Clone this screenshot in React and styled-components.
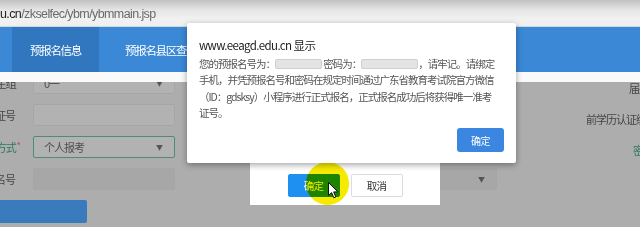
import React from 'react';
import styled, { createGlobalStyle } from 'styled-components';

const GlobalStyle = createGlobalStyle`
  html, body { margin: 0; padding: 0; background: #adadad; }
  body { font-family: "Noto Sans", "Noto Sans CJK SC", sans-serif; }
`;

const CJK = `"Noto Sans CJK SC", "Noto Sans", sans-serif`;

const Screen = styled.div`
  position: relative;
  width: 640px;
  height: 227px;
  overflow: hidden;
  display: flex;
  flex-direction: column;
  background: #adadad;
`;

const AddressBar = styled.div`
  height: 27px;
  flex: none;
  display: flex;
  align-items: center;
  background: linear-gradient(#c2c2c2 0%, #e6e6e6 40%, #f1f1f1 70%, #efefef 100%);
  border-bottom: 1px solid #d6d6d6;
  box-sizing: border-box;
  font-family: "Liberation Sans", Arial, sans-serif;
  font-size: 12.5px;
  letter-spacing: -0.6px;
  color: #6a6a6a;
  padding-top: 1px;
`;

const Host = styled.span`
  color: #222;
`;

const NavBar = styled.nav`
  height: 45px;
  flex: none;
  display: flex;
  background: #3b88d6;
  padding-left: 12px;
`;

const NavItem = styled.div`
  display: flex;
  align-items: center;
  justify-content: ${p => (p.$active ? 'center' : 'flex-start')};
  width: ${p => p.$width}px;
  padding-left: ${p => p.$pad || 0}px;
  background: ${p => (p.$active ? '#3077c0' : 'transparent')};
  color: #fff;
  font-family: ${CJK};
  font-size: 11.5px;
  letter-spacing: -1.3px;
  white-space: nowrap;
`;

const WhiteBand = styled.div`
  height: 10px;
  flex: none;
  background: #fafafa;
`;

const Content = styled.div`
  flex: 1;
  display: flex;
  overflow: hidden;
  background: #adadad;
`;

const FormCol = styled.div`
  width: 175px;
  flex: none;
  display: flex;
  flex-direction: column;
  gap: 10px;
  margin-top: -10px;
`;

const FormRow = styled.div`
  display: flex;
  align-items: center;
  height: 22px;
`;

const Label = styled.div`
  width: 20px;
  box-sizing: border-box;
  padding-right: ${p => (p.$required ? 0 : 5)}px;
  margin-right: 13px;
  display: flex;
  justify-content: flex-end;
  overflow: hidden;
  white-space: nowrap;
  font-family: ${CJK};
  font-size: 11px;
  letter-spacing: -1px;
  color: ${p => (p.$green ? '#2f7a5c' : '#454545')};
`;

const Star = styled.span`
  color: #b84848;
  font-size: 9px;
  margin-left: 1px;
  align-self: flex-start;
`;

const Input = styled.div`
  flex: 1;
  height: 100%;
  box-sizing: border-box;
  display: flex;
  align-items: center;
  justify-content: space-between;
  padding: 0 12px 0 10px;
  border-radius: 2px;
  background: ${p => (p.$disabled ? '#a7a7a7' : '#b2b2b2')};
  border: 1px solid ${p => (p.$focus ? '#4e8c78' : '#a6a6a6')};
  font-family: ${CJK};
  font-size: 11px;
  letter-spacing: -1px;
  color: #4f4f4f;
`;

const Caret = styled.span`
  font-size: 7px;
  color: #555;
`;

const SubmitButton = styled.div`
  width: 87px;
  height: 23px;
  background: #3a7bbe;
  border-radius: 0 2px 2px 0;
`;

const MidCol = styled.div`
  width: 197px;
  flex: none;
  margin-left: 125px;
  padding-top: 86px;
`;

const RightCol = styled.div`
  flex: 1;
  display: flex;
  flex-direction: column;
  gap: 19px;
  padding-top: 0px;
  overflow: hidden;
  white-space: nowrap;
  margin-left: 63px;
`;

const RightLabel = styled.div`
  margin-left: ${p => p.$indent}px;
  font-family: ${CJK};
  font-size: 11px;
  line-height: 12px;
  letter-spacing: -1px;
  color: ${p => (p.$green ? '#2f7a5c' : '#454545')};
`;

const BackDialog = styled.div`
  position: absolute;
  left: 250px;
  top: 120px;
  width: 190px;
  height: 85px;
  background: #fff;
  display: flex;
  align-items: flex-end;
  justify-content: center;
  gap: 11px;
  padding-bottom: 8px;
  box-sizing: border-box;
`;

const DialogButton = styled.div`
  width: 52px;
  height: 23px;
  box-sizing: border-box;
  display: flex;
  align-items: center;
  justify-content: center;
  border-radius: 2px;
  font-family: ${CJK};
  font-size: 10.5px;
  letter-spacing: -0.8px;
  background: ${p => (p.$primary ? '#1e90f2' : '#fff')};
  color: ${p => (p.$primary ? '#fff' : '#333')};
  border: 1px solid ${p => (p.$primary ? '#1e90f2' : '#dcdcdc')};
`;

const Highlight = styled.div`
  position: absolute;
  left: 306px;
  top: 162px;
  width: 43px;
  height: 43px;
  border-radius: 50%;
  background: #f6ea00;
  mix-blend-mode: multiply;
`;

const Cursor = styled.svg`
  position: absolute;
  left: 328px;
  top: 182px;
`;

const Alert = styled.div`
  position: absolute;
  left: 187px;
  top: 23px;
  width: 329px;
  height: 140px;
  box-sizing: border-box;
  background: #fff;
  border-radius: 2px;
  box-shadow: 0 2px 6px rgba(0, 0, 0, 0.35);
  padding: 13px 12px 11px 12px;
  display: flex;
  flex-direction: column;
`;

const AlertTitle = styled.div`
  font-family: ${CJK};
  font-size: 11.5px;
  letter-spacing: -0.6px;
  line-height: 18px;
  color: #222;
  margin-bottom: 2px;
`;

const AlertBody = styled.div`
  font-family: ${CJK};
  font-size: 10.5px;
  letter-spacing: -1px;
  line-height: 16.3px;
  color: #555;
  white-space: nowrap;
`;

const Masked = styled.span`
  display: inline-block;
  width: ${p => p.$width}px;
  height: 10px;
  vertical-align: -1px;
  background: #e4e4e4;
  border: 1px solid #cfcfcf;
  border-radius: 2px;
  box-sizing: border-box;
`;

const AlertFooter = styled.div`
  margin-top: auto;
  display: flex;
  justify-content: flex-end;
`;

const AlertButton = styled.div`
  width: 47px;
  height: 24px;
  display: flex;
  align-items: center;
  justify-content: center;
  border-radius: 3px;
  background: #3a86e0;
  color: #fff;
  font-family: ${CJK};
  font-size: 10px;
  letter-spacing: -0.6px;
`;

const App = () => {
  const rows = [
    { label: '考生组', required: true, value: '0一', select: true },
    { label: '身份证号', value: '' },
    { label: '报考方式', required: true, green: true, value: '个人报考', select: true, focus: true },
    { label: '预报名号', value: '', disabled: true },
  ];

  return (
    <>
      <GlobalStyle />
      <Screen>
        <AddressBar>
          <Host>u.cn</Host>/zkselfec/ybm/ybmmain.jsp
        </AddressBar>
        <NavBar>
          <NavItem $active $width={87}>预报名信息</NavItem>
          <NavItem $width={110} $pad={26}>预报名县区查询</NavItem>
        </NavBar>
        <WhiteBand />
        <Content>
          <FormCol>
            {rows.map(r => (
              <FormRow key={r.label}>
                <Label $required={r.required} $green={r.green}>
                  {r.label}
                  {r.required && <Star>*</Star>}
                </Label>
                <Input $focus={r.focus} $disabled={r.disabled}>
                  <span>{r.value}</span>
                  {r.select && <Caret>▼</Caret>}
                </Input>
              </FormRow>
            ))}
            <SubmitButton />
          </FormCol>
          <MidCol>
            <FormRow>
              <Input $disabled>
                <span />
                <Caret>▼</Caret>
              </Input>
            </FormRow>
          </MidCol>
          <RightCol>
            <RightLabel $indent={69}>届别</RightLabel>
            <RightLabel $indent={26}>前学历认证编号</RightLabel>
            <RightLabel $indent={73} $green>密码</RightLabel>
          </RightCol>
        </Content>

        <BackDialog>
          <DialogButton $primary>确定</DialogButton>
          <DialogButton>取消</DialogButton>
        </BackDialog>
        <Highlight />
        <Cursor width="12" height="17" viewBox="0 0 12 17">
          <path d="M0.5 0.5 L0.5 13.5 L3.6 10.6 L5.8 15.8 L7.8 15 L5.7 9.9 L9.9 9.9 Z" fill="#fff" stroke="#111" strokeWidth="1" strokeLinejoin="round" />
        </Cursor>

        <Alert>
          <AlertTitle>www.eeagd.edu.cn 显示</AlertTitle>
          <AlertBody>
            <div>
              您的预报名号为：<Masked $width={47} /> 密码为：<Masked $width={57} />，请牢记。请绑定
            </div>
            <div>手机，并凭预报名号和密码在规定时间通过广东省教育考试院官方微信</div>
            <div>（ID：gdsksy）小程序进行正式报名，正式报名成功后将获得唯一准考</div>
            <div>证号。</div>
          </AlertBody>
          <AlertFooter>
            <AlertButton>确定</AlertButton>
          </AlertFooter>
        </Alert>
      </Screen>
    </>
  );
};

export default App;
